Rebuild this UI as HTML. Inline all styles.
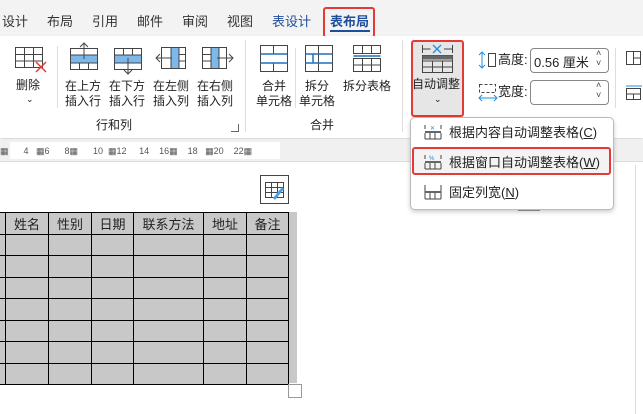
<!DOCTYPE html>
<html><head><meta charset="utf-8"><style>
*{margin:0;padding:0;box-sizing:border-box}
body{width:643px;height:414px;overflow:hidden;background:#fff;font-family:"Liberation Sans","Noto Sans CJK SC",sans-serif;font-size:12px;color:#222;position:relative}
.a{position:absolute}
.tab{position:absolute;top:11px;font-size:13px;color:#333}
.lbl{position:absolute;font-size:12px;color:#222;text-align:center;line-height:15px;white-space:nowrap}
td{border:1px solid #000;background:#c8c8c8;height:21.5px;font-size:13px;text-align:center;color:#222}
</style></head><body>
<div class="a" style="left:0;top:0;width:643px;height:36px;background:#f3f3f3"></div>
<div class="tab" style="left:2px">设计</div>
<div class="tab" style="left:47px">布局</div>
<div class="tab" style="left:92px">引用</div>
<div class="tab" style="left:137px">邮件</div>
<div class="tab" style="left:182px">审阅</div>
<div class="tab" style="left:227px">视图</div>
<div class="tab" style="left:272px;color:#1f4e9c">表设计</div>
<div class="tab" style="left:330px;color:#1f4e9c;font-weight:bold">表布局</div>
<div class="a" style="left:330px;top:30px;width:40px;height:2px;background:#1f4e9c"></div>
<div class="a" style="left:323px;top:7px;width:52px;height:31px;border:2px solid #e53935;border-radius:3px"></div>
<!-- ribbon -->
<div class="a" style="left:0;top:36px;width:643px;height:102px;background:#fff;box-shadow:0 1px 2px #ccc"></div>
<div class="a" style="left:57px;top:46px;width:1px;height:62px;background:#ddd"></div>
<div class="a" style="left:245px;top:40px;width:1px;height:92px;background:#ddd"></div>
<div class="a" style="left:402px;top:40px;width:1px;height:92px;background:#ddd"></div>
<div class="a" style="left:295px;top:48px;width:1px;height:60px;background:#ddd"></div>
<div class="a" style="left:615px;top:48px;width:1px;height:60px;background:#ddd"></div>
<!-- delete -->
<svg class="a" style="left:14px;top:46px" width="34" height="30"><g fill="none" stroke="#444"><rect x="1.5" y="1.5" width="27" height="20"/><path d="M1.5 8.5h27M1.5 15h27M10.5 1.5v20M19.5 1.5v20"/></g><path d="M22 16l10 10M32 16l-10 10" stroke="#e53935" stroke-width="1.5"/></svg>
<div class="lbl" style="left:16px;top:78px">删除</div>
<div class="lbl" style="left:26px;top:92px;font-size:9px">⌄</div>
<!-- insert icons -->
<svg class="a" style="left:69px;top:42px" width="30" height="30"><rect x="1.5" y="13" width="27" height="8" fill="#7cb9ea"/><g fill="none" stroke="#444"><rect x="1.5" y="6.5" width="27" height="21"/><path d="M1.5 13h27M1.5 21h27M10.5 21v6M19.5 21v6M15 1v16M11 5l4-4 4 4"/></g></svg>
<svg class="a" style="left:113px;top:42px" width="30" height="34"><rect x="1.5" y="13" width="27" height="8" fill="#7cb9ea"/><g fill="none" stroke="#444"><rect x="1.5" y="6.5" width="27" height="21"/><path d="M1.5 13h27M1.5 21h27M10.5 6.5v6M19.5 6.5v6M15 16v16M11 28l4 4 4-4"/></g></svg>
<svg class="a" style="left:155px;top:46px" width="32" height="26"><rect x="16" y="2" width="8" height="21" fill="#7cb9ea"/><g fill="none" stroke="#444"><rect x="6.5" y="1.5" width="24" height="21"/><path d="M16 1.5v21M24 1.5v21M24 8.5h6M24 15h6M1 12h16M5 8l-4 4 4 4"/></g></svg>
<svg class="a" style="left:200px;top:46px" width="34" height="26"><rect x="11" y="2" width="8" height="21" fill="#7cb9ea"/><g fill="none" stroke="#444"><rect x="2.5" y="1.5" width="24" height="21"/><path d="M11 1.5v21M19 1.5v21M2.5 8.5h8M2.5 15h8M17 12h16M29 8l4 4-4 4"/></g></svg>
<div class="lbl" style="left:65px;top:79px">在上方<br>插入行</div>
<div class="lbl" style="left:109px;top:79px">在下方<br>插入行</div>
<div class="lbl" style="left:153px;top:79px">在左侧<br>插入列</div>
<div class="lbl" style="left:197px;top:79px">在右侧<br>插入列</div>
<div class="lbl" style="left:96px;top:118px">行和列</div>
<div class="a" style="left:231px;top:124px;width:8px;height:8px;border-right:1px solid #666;border-bottom:1px solid #666"></div>
<!-- merge -->
<svg class="a" style="left:259px;top:44px" width="30" height="30"><g fill="none" stroke="#444"><rect x="1.5" y="1.5" width="27" height="26"/><path d="M14.5 1.5v8M14.5 19.5v8"/></g><path d="M1.5 10h27M1.5 19h27" stroke="#1f6fc0" stroke-width="1.5"/></svg>
<svg class="a" style="left:304px;top:44px" width="30" height="30"><g fill="none" stroke="#444"><rect x="1.5" y="1.5" width="27" height="26"/><path d="M14.5 1.5v26"/></g><path d="M1.5 10h27M1.5 19h27M9 10v9" stroke="#1f6fc0" stroke-width="1.5"/></svg>
<div class="a" style="left:296px;top:40px;width:5px;height:40px;background:#fff"></div>
<svg class="a" style="left:352px;top:44px" width="30" height="30"><g fill="none" stroke="#444"><rect x="1.5" y="1.5" width="27" height="8"/><rect x="1.5" y="14.5" width="27" height="13"/><path d="M10.5 1.5v8M19.5 1.5v8M10.5 14.5v13M19.5 14.5v13M1.5 21h27"/></g><path d="M1.5 12h27" stroke="#1f6fc0" stroke-width="1.5"/></svg>
<div class="lbl" style="left:256px;top:79px">合并<br>单元格</div>
<div class="lbl" style="left:299px;top:79px">拆分<br>单元格</div>
<div class="lbl" style="left:343px;top:79px">拆分表格</div>
<div class="lbl" style="left:310px;top:118px">合并</div>
<!-- auto adjust -->
<div class="a" style="left:411px;top:40px;width:53px;height:77px;background:#e6e6e6;border:2px solid #e53935;border-radius:3px"></div>
<svg class="a" style="left:421px;top:42px" width="34" height="32"><g fill="none" stroke="#444"><path d="M1.5 3v8M31.5 3v8M1.5 7h8M23 7h8.5"/><rect x="1.5" y="13.5" width="30" height="17"/><path d="M1.5 19h30M1.5 25h30M11.5 19v11M21.5 19v11"/></g><rect x="1.5" y="13.5" width="30" height="4" fill="#666"/><path d="M12 3l8 8M20 3l-8 8" stroke="#1f8fe0" stroke-width="1.3"/></svg>
<div class="lbl" style="left:412px;top:77px">自动调整</div>
<div class="lbl" style="left:434px;top:92px;font-size:9px">⌄</div>
<!-- height/width -->
<svg class="a" style="left:478px;top:50px" width="20" height="20"><path d="M4 2v16M1 5l3-3 3 3M1 15l3 3 3-3" stroke="#1f8fe0" fill="none"/><rect x="10.5" y="3.5" width="7" height="13" fill="none" stroke="#444"/></svg>
<div class="lbl" style="left:498px;top:52px;font-size:13px">高度:</div>
<div class="a" style="left:530px;top:48px;width:79px;height:25px;border:1px solid #888;border-radius:4px;font-size:13px;padding:3px 3px;color:#222">0.56 厘米</div>
<div class="a" style="left:596px;top:48px;font-size:9px;line-height:10px;color:#444">˄<br>˅</div>
<svg class="a" style="left:478px;top:82px" width="20" height="20"><rect x="1.5" y="2.5" width="16" height="8" fill="none" stroke="#444" stroke-dasharray="3 2"/><path d="M1 16h18M4 13l-3 3 3 3M16 13l3 3-3 3" stroke="#1f8fe0" fill="none"/></svg>
<div class="lbl" style="left:498px;top:84px;font-size:13px">宽度:</div>
<div class="a" style="left:530px;top:80px;width:79px;height:25px;border:1px solid #888;border-radius:4px"></div>
<div class="a" style="left:596px;top:80px;font-size:9px;line-height:10px;color:#444">˄<br>˅</div>
<svg class="a" style="left:625px;top:50px" width="18" height="60"><g fill="none" stroke="#444"><rect x="1.5" y="1.5" width="14" height="13"/><path d="M8.5 1.5v13M8.5 8h7"/><rect x="1.5" y="38.5" width="14" height="11"/><path d="M1.5 44h14M8.5 44v6"/></g><path d="M1 36h16" stroke="#1f8fe0"/></svg>
<!-- ruler -->
<div class="a" style="left:0;top:140px;width:643px;height:22px;background:#f0f0f0;border-bottom:1px solid #ddd"></div>
<div class="a" style="left:10px;top:142px;width:270px;height:17px;background:#fff"></div>
<div class="a" style="top:146px;left:0;font-size:9px;color:#555;white-space:pre;font-family:'Liberation Sans',sans-serif">▦      4   ▦6      8▦      10  ▦12     14    16▦    18   ▦20    22▦</div>
<!-- doc -->
<div class="a" style="left:635px;top:165px;width:8px;height:249px;border-left:1px solid #ddd"></div>
<div class="a" style="left:518px;top:210px;width:22px;height:1px;background:#999"></div>
<div class="a" style="left:260px;top:175px;width:29px;height:29px;border:1px solid #444;background:#fff"></div>
<svg class="a" style="left:264px;top:181px" width="22" height="20"><g fill="none" stroke="#444"><rect x="1.5" y="1.5" width="18" height="15"/><path d="M7.5 1.5v15M13.5 1.5v15M1.5 6.5h18M1.5 11.5h18"/></g><path d="M9 17l9-11 2 2-9 11z" fill="#4a9ee8"/></svg>
<div class="a" style="left:0;top:212px;width:297px;height:171px;background:#c8c8c8"></div>
<table class="a" style="left:-40px;top:212px;border-collapse:collapse">
<tr><td style="width:45px"></td><td style="width:43px">姓名</td><td style="width:43px">性别</td><td style="width:42px">日期</td><td style="width:70px">联系方法</td><td style="width:43px">地址</td><td style="width:42px">备注</td></tr>
<tr><td></td><td></td><td></td><td></td><td></td><td></td><td></td></tr>
<tr><td></td><td></td><td></td><td></td><td></td><td></td><td></td></tr>
<tr><td></td><td></td><td></td><td></td><td></td><td></td><td></td></tr>
<tr><td></td><td></td><td></td><td></td><td></td><td></td><td></td></tr>
<tr><td></td><td></td><td></td><td></td><td></td><td></td><td></td></tr>
<tr><td></td><td></td><td></td><td></td><td></td><td></td><td></td></tr>
<tr><td></td><td></td><td></td><td></td><td></td><td></td><td></td></tr>
</table>
<div class="a" style="left:288px;top:384px;width:14px;height:14px;border:1px solid #999;background:#fff"></div>
<!-- menu -->
<div class="a" style="left:410px;top:117px;width:204px;height:93px;background:#fff;border:1px solid #bbb;border-radius:5px;box-shadow:0 2px 5px rgba(0,0,0,.2)"></div>
<div class="a" style="left:412px;top:147px;width:199px;height:28px;background:#f3f3f3;border:2px solid #e53935;border-radius:3px"></div>
<svg class="a" style="left:424px;top:124px" width="18" height="16"><g fill="none" stroke="#444"><path d="M1 1v4M17 1v4M1 15h16M1 9v6M6 9v6M11 9v6M17 9v6"/></g><rect x="1" y="7" width="16" height="2" fill="#666"/><text x="6" y="6" font-size="6" fill="#1f8fe0">✕</text></svg>
<svg class="a" style="left:424px;top:154px" width="18" height="16"><g fill="none" stroke="#444"><path d="M1 1v4M17 1v4M1 15h16M1 9v6M6 9v6M11 9v6M17 9v6"/></g><rect x="1" y="7" width="16" height="2" fill="#666"/><text x="5" y="6" font-size="6" fill="#1f8fe0">%</text></svg>
<svg class="a" style="left:424px;top:184px" width="18" height="16"><g fill="none" stroke="#444"><path d="M1 1v14M17 1v14M1 15h16M6 9v6M11 9v6"/></g><rect x="1" y="7" width="16" height="2" fill="#666"/></svg>
<div class="lbl" style="left:449px;top:125px;font-size:13px">根据内容自动调整表格(<u>C</u>)</div>
<div class="lbl" style="left:449px;top:155px;font-size:13px">根据窗口自动调整表格(<u>W</u>)</div>
<div class="lbl" style="left:449px;top:185px;font-size:13px">固定列宽(<u>N</u>)</div>
</body></html>
